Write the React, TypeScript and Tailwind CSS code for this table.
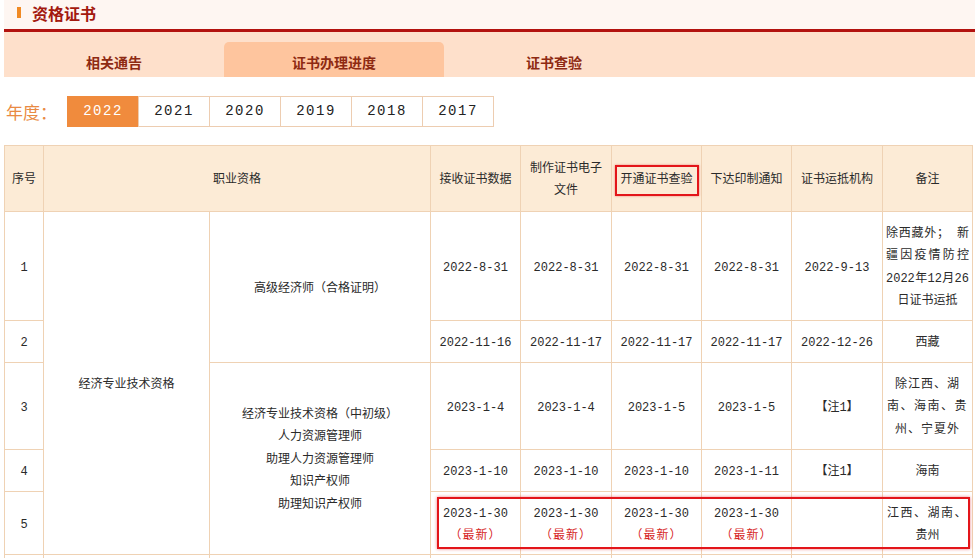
import React from "react";

const cjk = { fontFamily: '"Noto Sans CJK SC", "Noto Sans", sans-serif' };
const mono = { fontFamily: '"Liberation Mono", "Noto Sans CJK SC", monospace' };

const td = "border border-[#efd2b4] text-center align-middle text-[12px] text-[#2a2a2a] px-0 pb-0 pt-[3px]";

function Dates({ d }: { d: string[] }) {
  return (
    <>
      {d.map((x, i) => (
        <td key={i} className={td}>
          {x}
        </td>
      ))}
    </>
  );
}

function NewCell({ d }: { d: string }) {
  return (
    <td className={td}>
      <div className="leading-[22px]">{d}</div>
      <div className="leading-[22px] text-[#d61f1f] tracking-[1px]">（最新）</div>
    </td>
  );
}

function Lines({ lines, justify }: { lines: string[]; justify: boolean[] }) {
  return (
    <div className="px-[3px] leading-[22.5px]">
      {lines.map((l, i) => (
        <div
          key={i}
          className={
            "whitespace-nowrap " +
            (justify[i] ? "[text-align:justify] [text-align-last:justify]" : "text-center")
          }
        >
          {l}
        </div>
      ))}
    </div>
  );
}

export default function App() {
  const years = ["2022", "2021", "2020", "2019", "2018", "2017"];
  return (
    <div className="w-[975px] h-[558px] overflow-hidden bg-white" style={cjk}>
      {/* title */}
      <div className="ml-[4px] h-[32px] pb-[4px] bg-[#fef6f2] border-b-[3px] border-[#b3120f] flex items-center">
        <div className="ml-[13px] w-[4px] h-[11px] bg-[#f08a24] shrink-0" />
        <div className="ml-[11px] text-[16px] font-bold text-[#a3190f] leading-none">资格证书</div>
      </div>
      {/* tabs */}
      <div className="ml-[4px] h-[45px] bg-[#fee0cb] flex items-end">
        <div className="w-[220px] h-[35px] pt-[6px] flex items-center justify-center text-[14px] font-bold text-[#8e2a12]">
          相关通告
        </div>
        <div className="w-[220px] h-[35px] pt-[6px] flex items-center justify-center text-[14px] font-bold text-[#8e2a12] bg-[#fec59e] rounded-t-[5px]">
          证书办理进度
        </div>
        <div className="w-[220px] h-[35px] pt-[6px] flex items-center justify-center text-[14px] font-bold text-[#8e2a12]">
          证书查验
        </div>
      </div>
      {/* years */}
      <div className="mt-[19px] h-[31px] flex items-center">
        <div className="ml-[6px] w-[61px] text-[17px] text-[#e98a43] leading-none">年度：</div>
        <div className="flex">
          {years.map((y, i) => (
            <div
              key={y}
              className={
                "w-[72px] h-[31px] flex items-center justify-center text-[14px] tracking-[1.5px] border " +
                (i === 0
                  ? "bg-[#f08b3d] text-white border-[#f08b3d] font-light"
                  : "bg-white text-[#222] border-[#edcdb1] -ml-px")
              }
              style={mono}
            >
              {y}
            </div>
          ))}
        </div>
      </div>
      {/* table */}
      <div className="relative ml-[4px] mt-[18px]">
        <table className="table-fixed border-collapse w-[968px]" style={mono}>
          <colgroup>
            <col className="w-[39px]" />
            <col className="w-[166px]" />
            <col className="w-[221px]" />
            <col className="w-[90px]" />
            <col className="w-[91px]" />
            <col className="w-[90px]" />
            <col className="w-[90px]" />
            <col className="w-[91px]" />
            <col className="w-[90px]" />
          </colgroup>
          <tbody>
            <tr className="h-[66px] bg-[#fcebd6]">
              <td className={td}>序号</td>
              <td className={td} colSpan={2}>职业资格</td>
              <td className={td}>接收证书数据</td>
              <td className={td + " leading-[22px] !px-[8px]"}>制作证书电子文件</td>
              <td className={td}>
                <span className="inline-block border-2 border-[#e3151a] px-[4px] py-[5px] leading-[17px] shadow-[0_0_2px_rgba(227,21,26,0.5)]">
                  开通证书查验
                </span>
              </td>
              <td className={td}>下达印制通知</td>
              <td className={td}>证书运抵机构</td>
              <td className={td}>备注</td>
            </tr>
            <tr className="h-[109px]">
              <td className={td}>1</td>
              <td className={td} rowSpan={5}>经济专业技术资格</td>
              <td className={td} rowSpan={2}>高级经济师（合格证明）</td>
              <Dates d={["2022-8-31", "2022-8-31", "2022-8-31", "2022-8-31", "2022-9-13"]} />
              <td className={td}>
                <Lines
                  lines={["除西藏外； 新", "疆因疫情防控", "2022年12月26", "日证书运抵"]}
                  justify={[true, true, true, false]}
                />
              </td>
            </tr>
            <tr className="h-[42px]">
              <td className={td}>2</td>
              <Dates d={["2022-11-16", "2022-11-17", "2022-11-17", "2022-11-17", "2022-12-26"]} />
              <td className={td}>西藏</td>
            </tr>
            <tr className="h-[87px]">
              <td className={td}>3</td>
              <td className={td} rowSpan={3}>
                <div className="leading-[22.5px]">
                  <div>经济专业技术资格（中初级）</div>
                  <div>人力资源管理师</div>
                  <div>助理人力资源管理师</div>
                  <div>知识产权师</div>
                  <div>助理知识产权师</div>
                </div>
              </td>
              <Dates d={["2023-1-4", "2023-1-4", "2023-1-5", "2023-1-5", "【注1】"]} />
              <td className={td}>
                <div className="leading-[22.5px] whitespace-nowrap">
                  <div className="tracking-[1px]">除江西、湖</div>
                  <div className="tracking-[1.5px]">南、海南、贵</div>
                  <div className="tracking-[1px]">州、宁夏外</div>
                </div>
              </td>
            </tr>
            <tr className="h-[42px]">
              <td className={td}>4</td>
              <Dates d={["2023-1-10", "2023-1-10", "2023-1-10", "2023-1-11", "【注1】"]} />
              <td className={td}>海南</td>
            </tr>
            <tr className="h-[63px]">
              <td className={td}>5</td>
              <NewCell d="2023-1-30" />
              <NewCell d="2023-1-30" />
              <NewCell d="2023-1-30" />
              <NewCell d="2023-1-30" />
              <td className={td}></td>
              <td className={td}>
                <div className="leading-[22px] whitespace-nowrap">
                  <div className="tracking-[1.5px]">江西、湖南、</div>
                  <div>贵州</div>
                </div>
              </td>
            </tr>
            <tr className="h-[40px]">
              <td className={td}></td>
              <td className={td}></td>
              <td className={td}></td>
              <td className={td}></td>
              <td className={td}></td>
              <td className={td}></td>
              <td className={td}></td>
              <td className={td}></td>
              <td className={td}></td>
            </tr>
          </tbody>
        </table>
        <div className="absolute left-[433px] top-[352px] w-[533px] h-[52px] border-2 border-[#e3151a] shadow-[0_0_3px_rgba(227,21,26,0.55)] pointer-events-none" />
      </div>
    </div>
  );
}
